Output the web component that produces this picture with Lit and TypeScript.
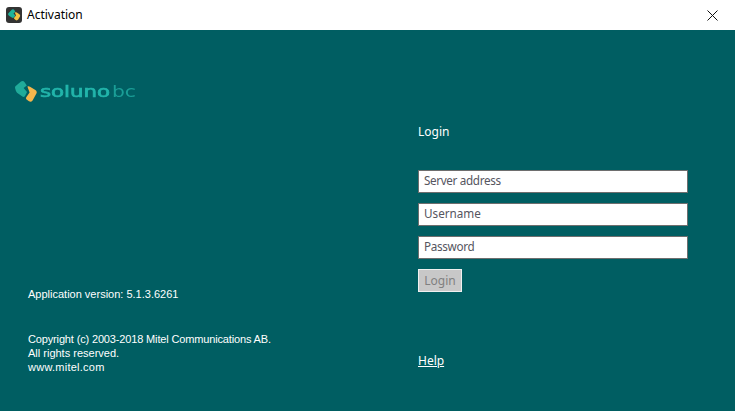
import { LitElement, html, css } from "lit";
import { customElement } from "lit/decorators.js";

@customElement("app-root")
export class AppRoot extends LitElement {
  static styles = css`
    :host { display: block; width: 735px; height: 411px; overflow: hidden; font-family: "Noto Sans", "Open Sans", sans-serif; }
    .titlebar { height: 30px; background: #fff; display: flex; align-items: center; padding-left: 6px; gap: 5px; box-sizing: border-box; }
    .app-icon { width: 16px; height: 16px; display: block; }
    .title { font-size: 12px; color: #000; flex: 1; padding-bottom: 2px; }
    .close { width: 46px; height: 30px; display: flex; align-items: center; justify-content: center; }
    .close svg { display: block; }
    .main { height: 381px; background: #005e62; display: flex; box-sizing: border-box; }
    .left { width: 418px; box-sizing: border-box; display: flex; flex-direction: column; }
    .logo { display: block; margin: 49px 0 0 13px; width: 126px; height: 24px; filter: blur(0.4px); }
    .logo-text-a { font: 400 16px "DejaVu Sans", sans-serif; fill: #22b5ab; stroke: #22b5ab; stroke-width: 0.7px; }
    .logo-text-b { font: 400 16px "DejaVu Sans", sans-serif; fill: #1a9e97; }
    .info { font-family: "Liberation Sans", Arial, sans-serif; font-size: 11px; line-height: 14px; color: #fff; padding-left: 28px; }
    .version { margin-top: 184px; }
    .copyright { margin-top: 31px; }
    .line { display: block; height: 14px; }
    .line.first { letter-spacing: -0.15px; }
    .line.web { letter-spacing: 0.25px; }
    .right { width: 270px; display: flex; flex-direction: column; color: #fff; }
    .heading { font-size: 12px; line-height: 16px; margin-top: 94px; }
    .field { height: 23px; box-sizing: border-box; border: 1px solid #6e6e6e; background: #fff; font-size: 11.7px; line-height: 19px; color: #555560; padding: 0 5px; display: block; }
    .f1 { margin-top: 30px; letter-spacing: -0.35px; }
    .f2 { margin-top: 10px; }
    .f3 { margin-top: 10px; letter-spacing: -0.3px; }
    .btn { margin-top: 10px; width: 44px; height: 23px; box-sizing: border-box; border: 1px solid #f0f0f0; background: #c8c8c8; color: #808080; font-size: 12px; line-height: 21px; text-align: center; }
    .help { margin-top: 61px; font-size: 12px; line-height: 16px; color: #fff; text-decoration: underline; align-self: flex-start; }
  `;

  render() {
    return html`
      <div class="titlebar">
        <svg class="app-icon" viewBox="0 0 16 16">
          <rect width="16" height="16" rx="3" fill="#333"/>
          <path d="M2.2 6.5 L6 2.6 Q7.4 1.6 8.3 3 L9.3 4.7 L7.5 6.4 L9.3 8.6 L8 10.5 Q7 11.3 5.8 10.6 L3 8.8 Q1.5 7.6 2.2 6.5Z" fill="#1fb39a"/>
          <path d="M8.8 5.6 Q9.6 5 10.8 5.6 L13.4 7.2 Q14.6 8 14 9.4 L12.2 12.6 Q11 14 9.6 13 L8.2 11.8 Q7.6 11 8.5 10.3 L10 8.4 Z" fill="#f5c242"/>
        </svg>
        <span class="title">Activation</span>
        <div class="close">
          <svg width="11" height="11" viewBox="0 0 11 11"><path d="M0.5 0.5 L10.5 10.5 M10.5 0.5 L0.5 10.5" stroke="#111" stroke-width="1" fill="none"/></svg>
        </div>
      </div>
      <div class="main">
        <div class="left">
          <svg class="logo" viewBox="0 0 126 24">
            <path d="M2.2 9.4 Q1.6 8 3 6.8 L8 2.6 Q10 1.2 11.4 3 L13.8 6.4 L10.6 9 L14 13 L12 17 Q11 18.4 9.4 17.6 L4 13.8 Q2.6 11.6 2.2 9.4Z" fill="#20ab9a"/>
            <path d="M14.4 7.6 Q15.6 7 17 7.8 L22.4 11 Q24.4 12.4 23.4 14.6 L19.6 21.4 Q18 23.4 16 22.2 L13.6 20.4 Q12.4 19.2 13.6 17.8 L16.6 13.4 Z" fill="#f4b54c"/>
            <text class="logo-text-a" x="27" y="18" textLength="70" lengthAdjust="spacingAndGlyphs">soluno</text>
            <text class="logo-text-b" x="99" y="18" textLength="24" lengthAdjust="spacingAndGlyphs">bc</text>
          </svg>
          <div class="info version">Application version: 5.1.3.6261</div>
          <div class="info copyright">
            <span class="line first">Copyright (c) 2003-2018 Mitel Communications AB.</span>
            <span class="line">All rights reserved.</span>
            <span class="line web">www.mitel.com</span>
          </div>
        </div>
        <div class="right">
          <div class="heading">Login</div>
          <div class="field f1">Server address</div>
          <div class="field f2">Username</div>
          <div class="field f3">Password</div>
          <div class="btn">Login</div>
          <a class="help">Help</a>
        </div>
      </div>
    `;
  }
}
